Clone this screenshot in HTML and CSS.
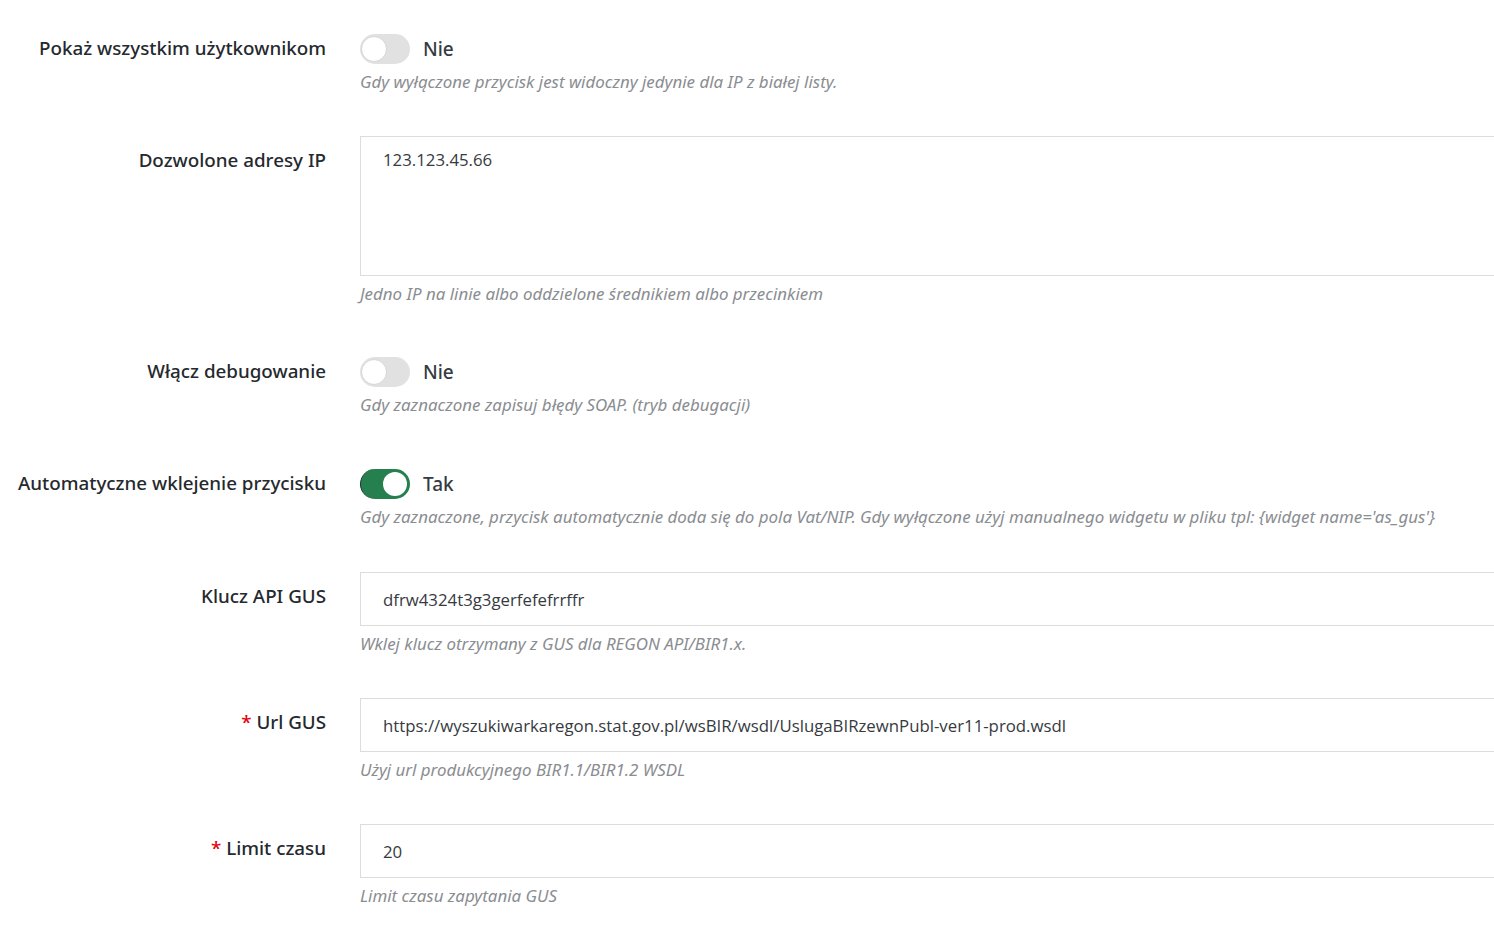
FILE: index.html
```html
<!DOCTYPE html>
<html lang="pl">
<head>
<meta charset="utf-8">
<title>Ustawienia GUS</title>
<link rel="stylesheet" href="styles.css">
</head>
<body>
<form class="form">
  <div class="group">
    <label class="label label--switch">Pokaż wszystkim użytkownikom</label>
    <div class="control">
      <div class="switch-row">
        <span class="switch"><span class="knob"></span></span>
        <span class="switch-text">Nie</span>
      </div>
      <p class="help">Gdy wyłączone przycisk jest widoczny jedynie dla IP z białej listy.</p>
    </div>
  </div>

  <div class="group group--loose">
    <label class="label">Dozwolone adresy IP</label>
    <div class="control">
      <textarea class="field field--area">123.123.45.66</textarea>
      <p class="help">Jedno IP na linie albo oddzielone średnikiem albo przecinkiem</p>
    </div>
  </div>

  <div class="group group--looser">
    <label class="label label--switch">Włącz debugowanie</label>
    <div class="control">
      <div class="switch-row">
        <span class="switch"><span class="knob"></span></span>
        <span class="switch-text">Nie</span>
      </div>
      <p class="help">Gdy zaznaczone zapisuj błędy SOAP. (tryb debugacji)</p>
    </div>
  </div>

  <div class="group group--mid">
    <label class="label label--switch">Automatyczne wklejenie przycisku</label>
    <div class="control">
      <div class="switch-row">
        <span class="switch switch--on"><span class="knob"></span></span>
        <span class="switch-text">Tak</span>
      </div>
      <p class="help">Gdy zaznaczone, przycisk automatycznie doda się do pola Vat/NIP. Gdy wyłączone użyj manualnego widgetu w pliku tpl: {widget name='as_gus'}</p>
    </div>
  </div>

  <div class="group">
    <label class="label">Klucz API GUS</label>
    <div class="control">
      <input class="field" type="text" value="dfrw4324t3g3gerfefefrrffr">
      <p class="help">Wklej klucz otrzymany z GUS dla REGON API/BIR1.x.</p>
    </div>
  </div>

  <div class="group">
    <label class="label"><span class="req">*</span> Url GUS</label>
    <div class="control">
      <input class="field" type="text" value="https://wyszukiwarkaregon.stat.gov.pl/wsBIR/wsdl/UslugaBIRzewnPubl-ver11-prod.wsdl">
      <p class="help">Użyj url produkcyjnego BIR1.1/BIR1.2 WSDL</p>
    </div>
  </div>

  <div class="group">
    <label class="label"><span class="req">*</span> Limit czasu</label>
    <div class="control">
      <input class="field" type="text" value="20">
      <p class="help">Limit czasu zapytania GUS</p>
    </div>
  </div>
</form>
</body>
</html>
```

FILE: styles.css
```css
html, body {
  margin: 0;
  padding: 0;
  background: #ffffff;
  overflow: hidden;
}

body {
  font-family: "Noto Sans", "Open Sans", sans-serif;
  color: #25292e;
}

.form {
  padding-top: 34px;
}

.group {
  display: grid;
  grid-template-columns: 326px 1200px;
  column-gap: 34px;
  margin-bottom: 44px;
}

.group--loose {
  margin-bottom: 53px;
}

.group--looser {
  margin-bottom: 54px;
}

.group--mid {
  margin-bottom: 45px;
}

.label {
  text-align: right;
  font-size: 18.8px;
  font-weight: 500;
  line-height: 24px;
  padding-top: 12px;
  color: #25292e;
  white-space: nowrap;
}

.label--switch {
  padding-top: 2px;
}

.req {
  color: #e3000f;
}

.control {
  display: flex;
  flex-direction: column;
}

.switch-row {
  display: flex;
  align-items: center;
  height: 30px;
  gap: 13px;
}

.switch {
  position: relative;
  width: 50px;
  height: 30px;
  border-radius: 15px;
  background: #e1e1e1;
  box-sizing: border-box;
}

.knob {
  position: absolute;
  top: 2px;
  left: 1px;
  width: 26px;
  height: 26px;
  border-radius: 50%;
  background: #ffffff;
  box-sizing: border-box;
  border: 1px solid #d6d6d6;
}

.switch--on {
  background: #267f4f;
  border-left: 1px solid #1b3a2a;
}

.switch--on .knob {
  left: auto;
  right: 3px;
  top: 3px;
  width: 24px;
  height: 24px;
  border: none;
}

.switch-text {
  font-size: 19px;
  font-weight: 500;
  color: #363a41;
}

.help {
  margin: 8px 0 0;
  font-size: 16.9px;
  line-height: 20px;
  font-style: italic;
  color: #8a8d91;
}

.field {
  display: block;
  width: 100%;
  height: 54px;
  box-sizing: border-box;
  border: 1px solid #dcdcdc;
  border-radius: 0;
  padding: 0 22px;
  font-family: "Open Sans", sans-serif;
  font-size: 16.8px;
  color: #363a41;
  background: #ffffff;
  outline: none;
}

.field--area {
  height: 140px;
  padding-top: 12px;
  line-height: 22px;
  resize: none;
}
```
